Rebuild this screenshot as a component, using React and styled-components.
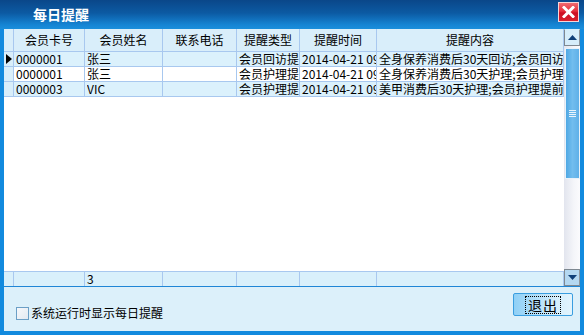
import React from "react";
import styled, { createGlobalStyle } from "styled-components";

const Global = createGlobalStyle`
  html, body { margin: 0; padding: 0; }
  body { font-family: "Noto Sans CJK SC", "Liberation Sans", sans-serif; font-size: 12px; color: #000; }
`;

const LINE = "#a8c8ef";
const COLS = "10px 71px 78px 74px 63px 77px 187px";

const Window = styled.div`
  width: 584px;
  height: 335px;
  background: #128ade;
  display: flex;
  flex-direction: column;
  box-sizing: border-box;
  overflow: hidden;
`;

const TitleBar = styled.div`
  height: 29px;
  flex: none;
  display: flex;
  align-items: center;
  padding: 0 5px 0 0;
  background: linear-gradient(to bottom, #0a4789 0%, #0c5aa3 45%, #1584d3 85%, #1a8fdc 100%);
  box-sizing: border-box;
`;

const Title = styled.div`
  flex: 1;
  color: #fff;
  font-weight: bold;
  font-size: 14px;
  line-height: 16px;
  margin-top: -1px;
  padding-left: 33px;
`;

const CloseBtn = styled.div`
  width: 21px;
  height: 20px;
  margin-top: -6px;
  box-sizing: border-box;
  border: 1px solid #f4d6da;
  background: linear-gradient(to bottom, #f06a70 0%, #e5303c 45%, #cc0f24 55%, #d8222e 100%);
  display: flex;
  align-items: center;
  justify-content: center;
`;

const Body = styled.div`
  flex: 1;
  margin: 0 4px 4px 4px;
  display: flex;
  flex-direction: column;
  min-height: 0;
`;

const GridPanel = styled.div`
  height: 257px;
  flex: none;
  display: flex;
  background: #fff;
`;

const Table = styled.div`
  width: 560px;
  display: flex;
  flex-direction: column;
  overflow: hidden;
`;

const Row = styled.div`
  display: grid;
  grid-template-columns: ${COLS};
  height: ${(p) => p.$h}px;
  flex: none;
  background: ${(p) => p.$bg};
  ${(p) => (p.$top ? `border-top: 1px solid ${LINE};` : "")}
  box-sizing: border-box;
`;

const Cell = styled.div`
  border-right: 1px solid ${LINE};
  border-bottom: 1px solid ${LINE};
  box-sizing: border-box;
  overflow: hidden;
  white-space: nowrap;
  display: flex;
  align-items: center;
  justify-content: ${(p) => (p.$center ? "center" : "flex-start")};
  padding-left: ${(p) => (p.$center ? 0 : 2)}px;
  background: ${(p) => p.$bg || "transparent"};
  font-size: 12px;
  line-height: 14px;
`;

const Clip = styled.span`
  display: block;
  overflow: hidden;
  white-space: nowrap;
  max-width: 100%;
`;

const FooterCell = styled(Cell)`
  border-bottom: none;
`;

const Filler = styled.div`
  flex: 1;
  background: #fff;
`;

const Indicator = styled.div`
  width: 0;
  height: 0;
  border-top: 5px solid transparent;
  border-bottom: 5px solid transparent;
  border-left: 6px solid #000;
`;

const ScrollBar = styled.div`
  width: 16px;
  display: flex;
  flex-direction: column;
  background: #d9eefa;
`;

const ArrowBtn = styled.div`
  height: 17px;
  flex: none;
  box-sizing: border-box;
  display: flex;
  align-items: center;
  justify-content: center;
  background: ${(p) => (p.$down ? "#b4d8f1" : "#d6edfa")};
  border-left: 1px solid #7e8891;
  border-bottom: 1px solid #7e8891;
  border-right: 1px solid #8d969e;
  border-top: 1px solid ${(p) => (p.$down ? "#7e8891" : "#d9eefa")};
`;

const Track = styled.div`
  flex: 1;
  background: linear-gradient(to right, #e2e5ee 0%, #f4f5f9 60%, #fbfbfd 100%);
  padding-top: 2px;
  display: flex;
  flex-direction: column;
  align-items: center;
`;

const Thumb = styled.div`
  width: 15px;
  height: 131px;
  box-sizing: border-box;
  border: 1px solid #e8f2fa;
  background: linear-gradient(to right, #4fa8e4 0%, #72bdee 50%, #5fb0e8 100%);
  display: flex;
  flex-direction: column;
  align-items: center;
  justify-content: center;
  gap: 1px;
`;

const Grip = styled.div`
  width: 7px;
  height: 1px;
  background: #eaf4fc;
`;

const BottomPanel = styled.div`
  flex: 1;
  background: #dcf0fa;
  border-top: 1px solid #1f86d6;
  display: flex;
  justify-content: space-between;
  align-items: flex-start;
  padding: 0 7px 0 12px;
`;

const CheckLabel = styled.label`
  display: flex;
  align-items: center;
  margin-top: 19px;
  font-size: 12px;
  line-height: 14px;
  gap: 2px;
`;

const CheckBox = styled.span`
  width: 13px;
  height: 13px;
  box-sizing: border-box;
  border: 1px solid #6b9fc6;
  background: linear-gradient(135deg, #f6f8fb 0%, #e2e9f1 100%);
  display: inline-block;
`;

const ExitBtn = styled.div`
  width: 60px;
  height: 23px;
  margin-top: 6px;
  box-sizing: border-box;
  border: 1px solid #3a9ee0;
  border-radius: 2px;
  background: linear-gradient(to right, #8fd0f6 0%, #b4e0fa 40%, #d6effc 75%, #e2f4fd 100%);
  display: flex;
  align-items: center;
  justify-content: center;
`;

const FocusText = styled.span`
  border: 1px dotted #000;
  padding: 0 2px;
  font-size: 14px;
  line-height: 16px;
  letter-spacing: 1px;
`;

const HEAD = ["会员卡号", "会员姓名", "联系电话", "提醒类型", "提醒时间", "提醒内容"];
const DATA = [
  ["0000001", "张三", "", "会员回访提醒", "2014-04-21 09:00", "全身保养消费后30天回访;会员回访提醒"],
  ["0000001", "张三", "", "会员护理提醒", "2014-04-21 09:00", "全身保养消费后30天护理;会员护理提醒"],
  ["0000003", "VIC", "", "会员护理提醒", "2014-04-21 09:00", "美甲消费后30天护理;会员护理提前提醒"],
];
const ROWBG = ["#dbf1fc", "#ffffff", "#dbf1fc"];

export default function App() {
  return (
    <>
      <Global />
      <Window>
        <TitleBar>
          <Title>每日提醒</Title>
          <CloseBtn>
            <svg width="13" height="12" viewBox="0 0 13 12">
              <path d="M2 1.5 L11 10.5 M11 1.5 L2 10.5" stroke="#fff" strokeWidth="3" strokeLinecap="square" />
            </svg>
          </CloseBtn>
        </TitleBar>
        <Body>
          <GridPanel>
            <Table>
              <Row $h={23} $bg="#d9eefa">
                <Cell />
                {HEAD.map((h) => (
                  <Cell key={h} $center>{h}</Cell>
                ))}
              </Row>
              {DATA.map((r, i) => (
                <Row key={i} $h={15} $bg={ROWBG[i]}>
                  <Cell $bg="#d9eefa">{i === 0 && <Indicator />}</Cell>
                  {r.map((c, j) => (
                    <Cell key={j}>{c && <Clip>{c}</Clip>}</Cell>
                  ))}
                </Row>
              ))}
              <Filler />
              <Row $h={15} $bg="#d9f0fb" $top>
                <FooterCell />
                <FooterCell />
                <FooterCell>3</FooterCell>
                <FooterCell />
                <FooterCell />
                <FooterCell />
                <FooterCell />
              </Row>
            </Table>
            <ScrollBar>
              <ArrowBtn>
                <svg width="9" height="5" viewBox="0 0 9 5">
                  <path d="M0 5 L4.5 0 L9 5 Z" fill="#0f3f78" />
                </svg>
              </ArrowBtn>
              <Track>
                <Thumb>
                  <Grip />
                  <Grip />
                  <Grip />
                  <Grip />
                </Thumb>
              </Track>
              <ArrowBtn $down>
                <svg width="9" height="5" viewBox="0 0 9 5">
                  <path d="M0 0 L9 0 L4.5 5 Z" fill="#0f3f78" />
                </svg>
              </ArrowBtn>
            </ScrollBar>
          </GridPanel>
          <BottomPanel>
            <CheckLabel>
              <CheckBox />
              系统运行时显示每日提醒
            </CheckLabel>
            <ExitBtn>
              <FocusText>退出</FocusText>
            </ExitBtn>
          </BottomPanel>
        </Body>
      </Window>
    </>
  );
}
